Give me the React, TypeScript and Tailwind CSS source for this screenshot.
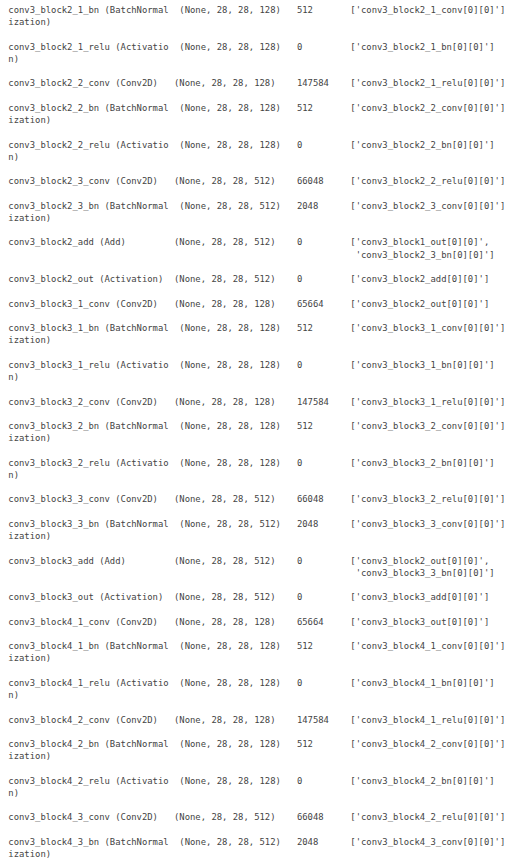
import React from "react";

type Layer = [string, string, string, string[]];

const layers: Layer[] = [
  ["conv3_block2_1_bn (BatchNormalization)", "(None, 28, 28, 128)", "512", ["conv3_block2_1_conv[0][0]"]],
  ["conv3_block2_1_relu (Activation)", "(None, 28, 28, 128)", "0", ["conv3_block2_1_bn[0][0]"]],
  ["conv3_block2_2_conv (Conv2D)", "(None, 28, 28, 128)", "147584", ["conv3_block2_1_relu[0][0]"]],
  ["conv3_block2_2_bn (BatchNormalization)", "(None, 28, 28, 128)", "512", ["conv3_block2_2_conv[0][0]"]],
  ["conv3_block2_2_relu (Activation)", "(None, 28, 28, 128)", "0", ["conv3_block2_2_bn[0][0]"]],
  ["conv3_block2_3_conv (Conv2D)", "(None, 28, 28, 512)", "66048", ["conv3_block2_2_relu[0][0]"]],
  ["conv3_block2_3_bn (BatchNormalization)", "(None, 28, 28, 512)", "2048", ["conv3_block2_3_conv[0][0]"]],
  ["conv3_block2_add (Add)", "(None, 28, 28, 512)", "0", ["conv3_block1_out[0][0]", "conv3_block2_3_bn[0][0]"]],
  ["conv3_block2_out (Activation)", "(None, 28, 28, 512)", "0", ["conv3_block2_add[0][0]"]],
  ["conv3_block3_1_conv (Conv2D)", "(None, 28, 28, 128)", "65664", ["conv3_block2_out[0][0]"]],
  ["conv3_block3_1_bn (BatchNormalization)", "(None, 28, 28, 128)", "512", ["conv3_block3_1_conv[0][0]"]],
  ["conv3_block3_1_relu (Activation)", "(None, 28, 28, 128)", "0", ["conv3_block3_1_bn[0][0]"]],
  ["conv3_block3_2_conv (Conv2D)", "(None, 28, 28, 128)", "147584", ["conv3_block3_1_relu[0][0]"]],
  ["conv3_block3_2_bn (BatchNormalization)", "(None, 28, 28, 128)", "512", ["conv3_block3_2_conv[0][0]"]],
  ["conv3_block3_2_relu (Activation)", "(None, 28, 28, 128)", "0", ["conv3_block3_2_bn[0][0]"]],
  ["conv3_block3_3_conv (Conv2D)", "(None, 28, 28, 512)", "66048", ["conv3_block3_2_relu[0][0]"]],
  ["conv3_block3_3_bn (BatchNormalization)", "(None, 28, 28, 512)", "2048", ["conv3_block3_3_conv[0][0]"]],
  ["conv3_block3_add (Add)", "(None, 28, 28, 512)", "0", ["conv3_block2_out[0][0]", "conv3_block3_3_bn[0][0]"]],
  ["conv3_block3_out (Activation)", "(None, 28, 28, 512)", "0", ["conv3_block3_add[0][0]"]],
  ["conv3_block4_1_conv (Conv2D)", "(None, 28, 28, 128)", "65664", ["conv3_block3_out[0][0]"]],
  ["conv3_block4_1_bn (BatchNormalization)", "(None, 28, 28, 128)", "512", ["conv3_block4_1_conv[0][0]"]],
  ["conv3_block4_1_relu (Activation)", "(None, 28, 28, 128)", "0", ["conv3_block4_1_bn[0][0]"]],
  ["conv3_block4_2_conv (Conv2D)", "(None, 28, 28, 128)", "147584", ["conv3_block4_1_relu[0][0]"]],
  ["conv3_block4_2_bn (BatchNormalization)", "(None, 28, 28, 128)", "512", ["conv3_block4_2_conv[0][0]"]],
  ["conv3_block4_2_relu (Activation)", "(None, 28, 28, 128)", "0", ["conv3_block4_2_bn[0][0]"]],
  ["conv3_block4_3_conv (Conv2D)", "(None, 28, 28, 512)", "66048", ["conv3_block4_2_relu[0][0]"]],
  ["conv3_block4_3_bn (BatchNormalization)", "(None, 28, 28, 512)", "2048", ["conv3_block4_3_conv[0][0]"]],
];

const POS = [32, 55, 65, 98];

function rowLines(fields: string[]): string[] {
  const left = [...fields];
  const out: string[] = [];
  while (left.some((s) => s.length > 0)) {
    let line = "";
    for (let col = 0; col < 4; col++) {
      const start = col > 0 ? POS[col - 1] : 0;
      const end = POS[col];
      const space = col !== 3 ? 2 : 0;
      let cutoff = col === 0 ? 30 : col === 1 ? 19 : end - start - space;
      let fit = left[col].slice(0, cutoff);
      const conds = ["),", "},", "],", "',"];
      const cands = conds
        .filter((c) => fit.indexOf(c) >= 0)
        .map((c) => fit.indexOf(c) + c.length);
      if (cands.length) {
        cutoff = Math.min(...cands);
        fit = fit.slice(0, cutoff);
      }
      if (col === 0) line += " ";
      line += fit;
      if (space) line += " ".repeat(space);
      left[col] = left[col].slice(cutoff);
      line += " ".repeat(Math.max(0, POS[col] - line.length));
    }
    out.push(line.replace(/\s+$/, ""));
  }
  return out;
}

function connStr(c: string[]): string {
  return "[" + c.map((x) => `'${x}'`).join(", ") + "]";
}

const lines: string[] = [];
layers.forEach(([name, shape, params, conn], i) => {
  rowLines([name, shape, params, connStr(conn)]).forEach((l) => lines.push(l));
  if (i !== layers.length - 1) lines.push("");
});

export default function App() {
  return (
    <div className="w-[518px] h-[863px] overflow-hidden bg-white">
      <pre
        className="m-0 pt-[4px] pl-[3px] text-[8.9px] leading-[12.23px] text-[#444] whitespace-pre"
        style={{ fontFamily: '"DejaVu Sans Mono", "Liberation Mono", monospace' }}
      >
        {lines.join("\n")}
      </pre>
    </div>
  );
}
